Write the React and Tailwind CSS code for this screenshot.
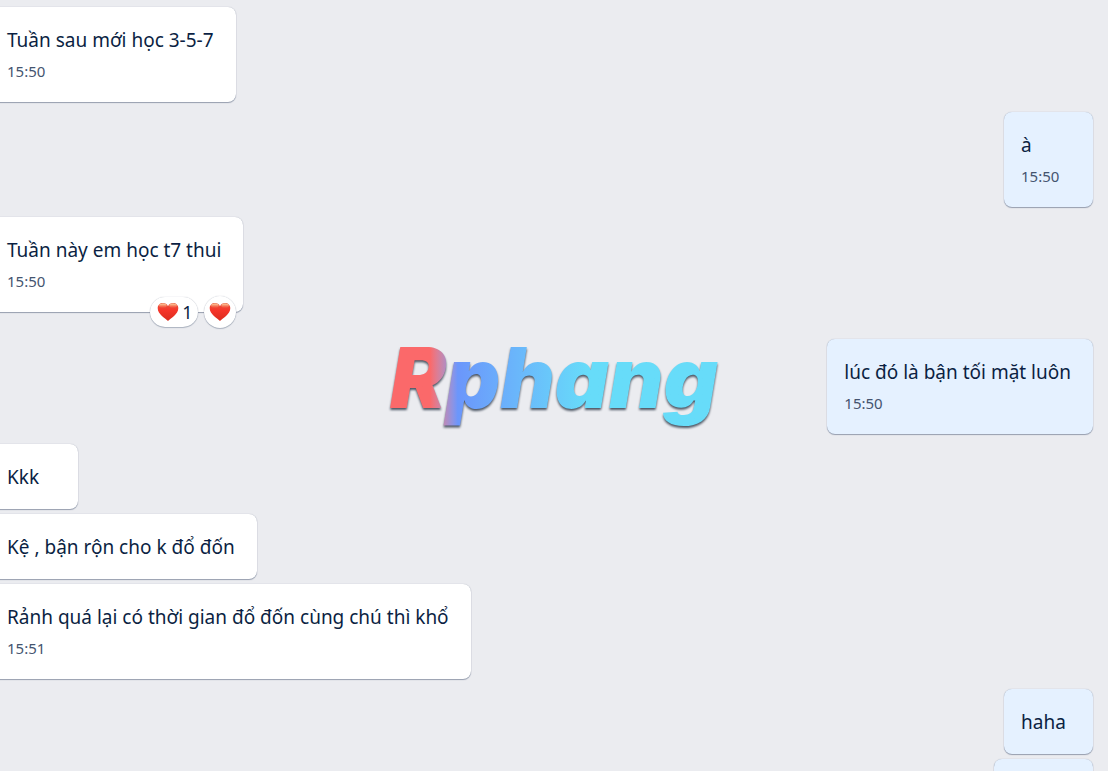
const MESSAGES = [
  { id: 1, text: 'Tuần sau mới học 3-5-7', time: '15:50' },
  { id: 2, text: 'à', time: '15:50', mine: true },
  { id: 3, text: 'Tuần này em học t7 thui', time: '15:50', likes: 1 },
  { id: 4, text: 'lúc đó là bận tối mặt luôn', time: '15:50', mine: true },
  { id: 5, text: 'Kkk' },
  { id: 6, text: 'Kệ , bận rộn cho k đổ đốn', grouped: true },
  {
    id: 7,
    text: 'Rảnh quá lại có thời gian đổ đốn cùng chú thì khổ',
    time: '15:51',
    grouped: true,
  },
  { id: 8, text: 'haha', mine: true },
  { id: 9, text: '', mine: true, grouped: true },
];

const Heart = () => (
  <svg viewBox="0 0 22 20" className="w-[22px] h-5 shrink-0" aria-hidden="true">
    <defs>
      <linearGradient id="heart-fill" x1="0" y1="0" x2="0" y2="1">
        <stop offset="0" stopColor="#e8583f" />
        <stop offset="0.4" stopColor="#f6352a" />
        <stop offset="1" stopColor="#d92c1e" />
      </linearGradient>
      <linearGradient id="heart-gloss" x1="0" y1="0" x2="0" y2="1">
        <stop offset="0" stopColor="#ffe2ae" stopOpacity="0.95" />
        <stop offset="1" stopColor="#ff9a70" stopOpacity="0" />
      </linearGradient>
    </defs>
    <path
      d="M11 19C8.6 16.4.7 12.2.7 6.2.7 3 3 1 5.9 1 8.2 1 10.1 2.2 11 4.2 11.9 2.2 13.8 1 16.1 1 19 1 21.3 3 21.3 6.2 21.3 12.2 13.4 16.4 11 19Z"
      fill="url(#heart-fill)"
    />
    <ellipse cx="5.9" cy="3.8" rx="3.8" ry="2.3" fill="url(#heart-gloss)" />
    <ellipse cx="16.1" cy="3.8" rx="3.8" ry="2.3" fill="url(#heart-gloss)" />
  </svg>
);

const Reactions = ({ count }) => (
  <div className="absolute right-[7px] -bottom-4 flex items-center gap-[6px]">
    <button
      aria-label={`${count} reaction`}
      className="flex items-center h-[30px] w-12 pl-[7px] gap-[3px] rounded-full bg-white text-lg leading-6 shadow-[0_1px_1px_#091e4240,0_0_1px_#091e424f]"
    >
      <Heart />
      {count}
    </button>
    <button
      aria-label="React"
      className="flex items-center justify-center w-8 h-8 rounded-full bg-white shadow-[0_1px_1px_#091e4240,0_0_1px_#091e424f]"
    >
      <Heart />
    </button>
  </div>
);

const Message = ({ text, time, mine, likes, grouped }) => (
  <li
    className={`flex ${mine ? 'justify-end' : 'justify-start'} ${
      grouped ? 'mt-[5px]' : 'mt-[10px]'
    } ${likes ? 'pb-[17px]' : ''}`}
  >
    <div
      className={`relative min-w-[89px] pt-[21px] pb-5 pr-[22px] rounded-lg shadow-[0_1px_1px_#091e4259,0_0_1px_#091e424f] ${
        mine ? 'bg-[#e5f1ff] pl-[17px]' : 'bg-white pl-[18px]'
      } ${text ? '' : 'w-[99px]'}`}
    >
      <p className="min-h-6 text-[19px] leading-6">{text}</p>
      {time && (
        <time className="block mt-[9px] pb-px text-[15px] leading-5 text-[#44546f]">
          {time}
        </time>
      )}
      {likes && <Reactions count={likes} />}
    </div>
  </li>
);

const Watermark = () => (
  <div className="fixed inset-0 flex items-center justify-center pb-4 pointer-events-none">
    <span className="px-2 font-['Inter'] text-[84px] leading-[112px] font-black italic text-transparent bg-clip-text bg-linear-to-r from-[#fb696a] from-14% via-[#6b96fb] via-22% to-[#67dcf9] to-60% drop-shadow-[0_2px_1px_#4b5563]">
      Rphang
    </span>
  </div>
);

export default function App() {
  return (
    <main className="h-screen overflow-hidden bg-[#ebecf0] text-[#0b1f43] font-['Noto_Sans',sans-serif]">
      <ul className="-ml-[11px] mr-[15px] -mt-[3px] flow-root">
        {MESSAGES.map((m) => (
          <Message key={m.id} {...m} />
        ))}
      </ul>
      <Watermark />
    </main>
  );
}
